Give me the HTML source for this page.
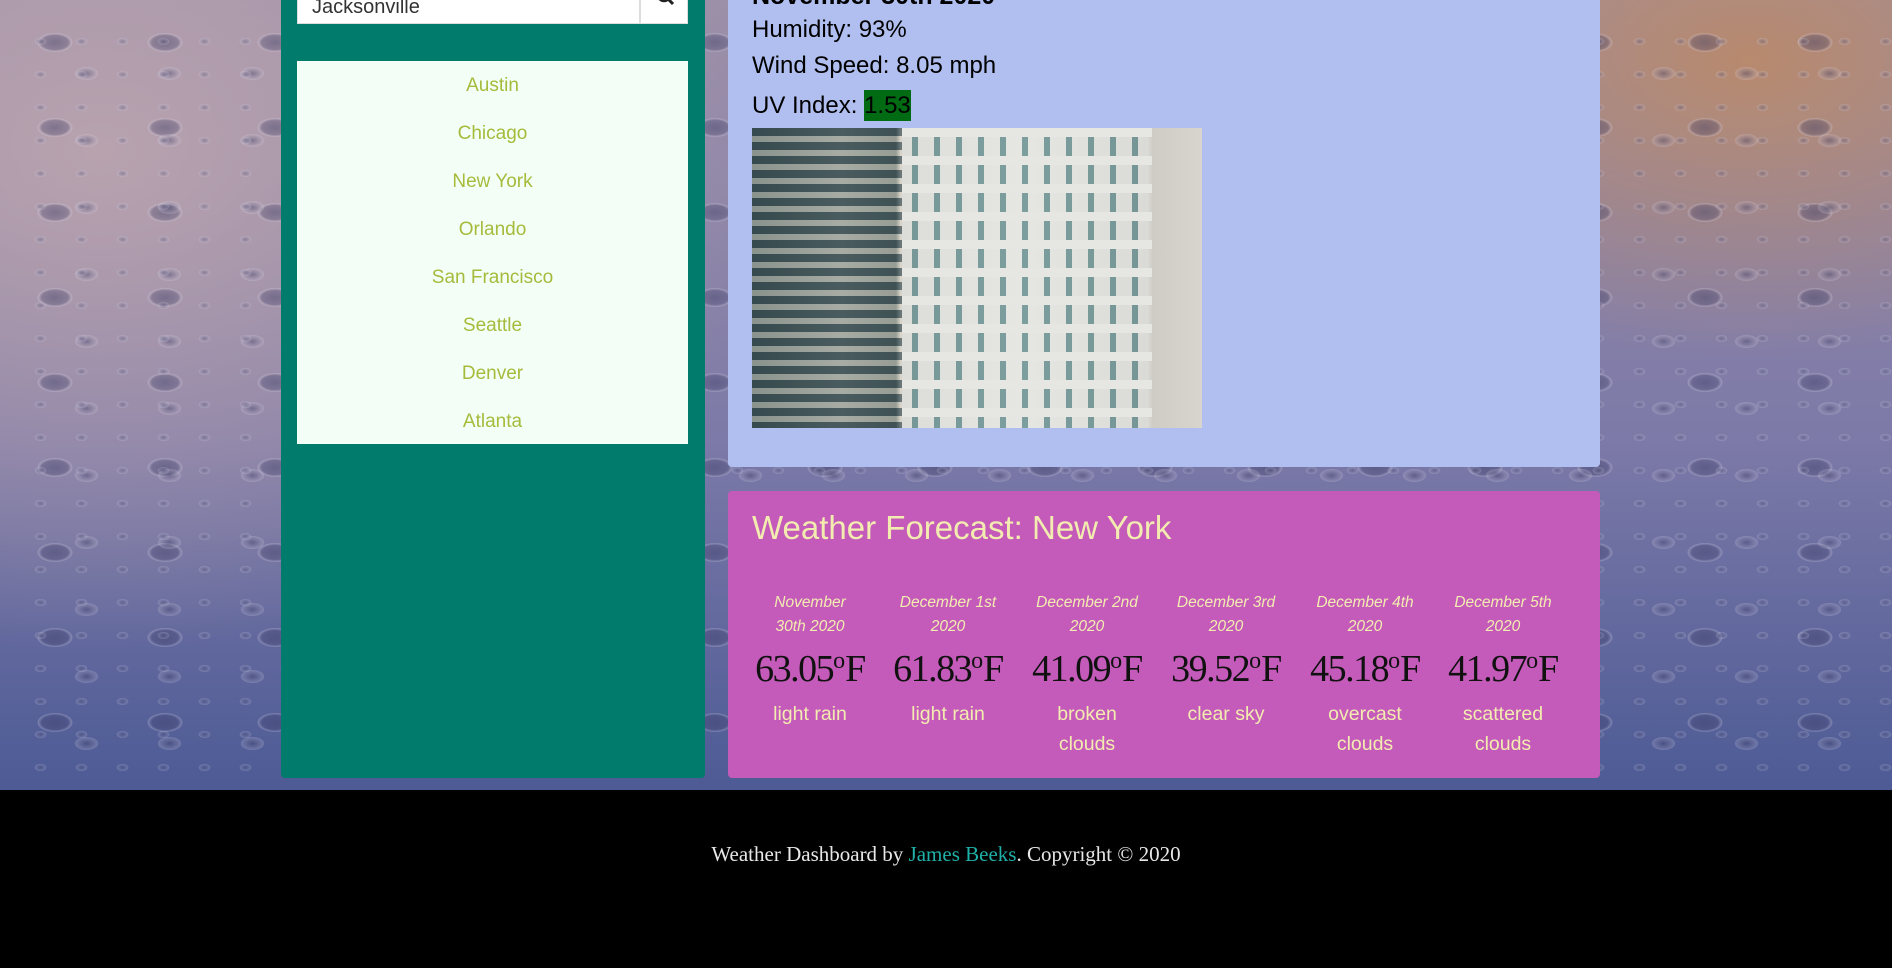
<!DOCTYPE html>
<html><head><meta charset="utf-8"><style>
*{margin:0;padding:0;box-sizing:border-box}
body{width:1892px;height:968px;overflow:hidden;position:relative;font-family:"Liberation Sans",sans-serif;
background:
radial-gradient(ellipse 500px 300px at 1750px 60px,#b88a6e 0%,rgba(184,138,110,0) 100%),
radial-gradient(ellipse 700px 500px at 100px 150px,#b8a2ae 0%,rgba(184,162,174,0) 100%),
linear-gradient(180deg,#9a8ea8 0%,#7d7aa8 45%,#4f5c96 80%,#3a4a86 100%);}
.drops{position:absolute;left:0;top:0;width:1892px;height:790px;
background-image:radial-gradient(ellipse 24px 13px at 50% 50%,rgba(60,60,100,.45) 0%,rgba(60,60,100,.3) 55%,rgba(230,225,240,.25) 70%,rgba(0,0,0,0) 75%);
background-size:110px 85px;}
.drops3{position:absolute;left:45px;top:40px;width:1847px;height:750px;
background-image:radial-gradient(ellipse 16px 9px at 50% 50%,rgba(60,60,100,.4) 0%,rgba(230,225,240,.2) 70%,rgba(0,0,0,0) 75%);
background-size:83px 67px;}
.drops2{position:absolute;left:20px;top:25px;width:1872px;height:765px;
background-image:radial-gradient(ellipse 8px 5px at 50% 50%,rgba(60,60,100,.3) 0%,rgba(220,220,240,.2) 70%,rgba(0,0,0,0) 75%);
background-size:41px 33px;}
.left{position:absolute;left:281px;top:0;width:424px;height:778px;background:#007b6c;border-radius:0 0 4px 4px}
.search{position:absolute;left:297px;top:-10px;width:343px;height:34px;background:#fff;border:1px solid #ddd;font-size:20px;color:#333;padding:6px 14px;line-height:20px}
.btn{position:absolute;left:640px;top:-10px;width:48px;height:34px;background:#fff;border:1px solid #ddd}
.list{position:absolute;left:297px;top:61px;width:391px;height:383px;background:#f3fff6}
.list div{height:48px;line-height:50px;text-align:center;color:#a6bb3c;font-size:19px}
.cur{position:absolute;left:728px;top:0;width:872px;height:467px;background:#b0bfef;border-radius:0 0 4px 4px}
.cur p{position:absolute;left:24px;font-size:24px;color:#000}
.img{position:absolute;left:24px;top:128px;width:450px;height:300px;overflow:hidden;
background:linear-gradient(90deg,#596e72 0%,#8a9a9a 20%,#6f8080 32%,#dcdcd8 33%,#e6e6e2 60%,#dadad6 88%,#cfccc5 89%,#d8d5cf 100%)}
.glass{position:absolute;left:0;top:0;width:150px;height:300px;background:repeating-linear-gradient(180deg,rgba(30,50,55,.6) 0 8px,rgba(210,200,180,.4) 8px 14px)}
.win{position:absolute;left:150px;top:0;width:250px;height:300px;background:
repeating-linear-gradient(90deg,rgba(0,0,0,0) 0 10px,rgba(40,110,115,.55) 10px 16px,rgba(0,0,0,0) 16px 22px),
linear-gradient(#fff,#fff);mix-blend-mode:multiply}
.win2{position:absolute;left:150px;top:0;width:250px;height:300px;background:repeating-linear-gradient(180deg,rgba(230,230,226,1) 0 9px,rgba(0,0,0,0) 9px 28px)}
.fc{position:absolute;left:728px;top:491px;width:872px;height:287px;background:#c45bba;border-radius:4px}
.fc h2{position:absolute;left:24px;top:18px;font-weight:300;font-size:33px;color:#f3ecb0}
.col{position:absolute;top:100px;width:130px;text-align:center;color:#f3ecb0}
.d{font-style:italic;font-size:15.5px;line-height:24px}
.t{font-family:"Liberation Serif",serif;font-size:38px;color:#111;margin-top:8px;line-height:44px;letter-spacing:-1.5px}
.t sup{font-size:24px;vertical-align:top;line-height:28px;letter-spacing:0}
.s{font-size:19.5px;line-height:30px;margin-top:8px}
.foot{position:absolute;left:0;top:790px;width:1892px;height:178px;background:#000;text-align:center;font-family:"Liberation Serif",serif;font-size:21px;color:#e8e8e8;padding-top:52px}
.foot a{color:#1fb0a8;text-decoration:none}
</style></head><body>
<div class="drops"></div><div class="drops3"></div><div class="drops2"></div>
<div class="left"></div>
<div class="search">Jacksonville</div>
<div class="btn"><svg width="48" height="34" viewBox="0 0 48 34"><circle cx="23" cy="4" r="6" fill="none" stroke="#222" stroke-width="2.5"/><line x1="27" y1="8" x2="32" y2="13" stroke="#222" stroke-width="3"/></svg></div>
<div class="list"><div>Austin</div><div>Chicago</div><div>New York</div><div>Orlando</div><div>San Francisco</div><div>Seattle</div><div>Denver</div><div>Atlanta</div></div>
<div class="cur">
<p style="top:-18px;font-weight:bold;font-size:25px">November 30th 2020</p>
<p style="top:16px">Humidity: 93%</p>
<p style="top:52px">Wind Speed: 8.05 mph</p>
<p style="top:92px">UV Index: <span style="background:#006b12;padding:2px 0">1.53</span></p>
<div class="img"><div class="glass"></div><div class="win"></div><div class="win2"></div></div>
</div>
<div class="fc"><h2>Weather Forecast: New York</h2>
<div class="col" style="left:17px"><div class="d">November<br>30th 2020</div><div class="t">63.05<sup>o</sup>F</div><div class="s">light rain</div></div>
<div class="col" style="left:155px"><div class="d">December 1st<br>2020</div><div class="t">61.83<sup>o</sup>F</div><div class="s">light rain</div></div>
<div class="col" style="left:294px"><div class="d">December 2nd<br>2020</div><div class="t">41.09<sup>o</sup>F</div><div class="s">broken<br>clouds</div></div>
<div class="col" style="left:433px"><div class="d">December 3rd<br>2020</div><div class="t">39.52<sup>o</sup>F</div><div class="s">clear sky</div></div>
<div class="col" style="left:572px"><div class="d">December 4th<br>2020</div><div class="t">45.18<sup>o</sup>F</div><div class="s">overcast<br>clouds</div></div>
<div class="col" style="left:710px"><div class="d">December 5th<br>2020</div><div class="t">41.97<sup>o</sup>F</div><div class="s">scattered<br>clouds</div></div>
</div>
<div class="foot">Weather Dashboard by <a>James Beeks</a>. Copyright © 2020</div>
</body></html>
